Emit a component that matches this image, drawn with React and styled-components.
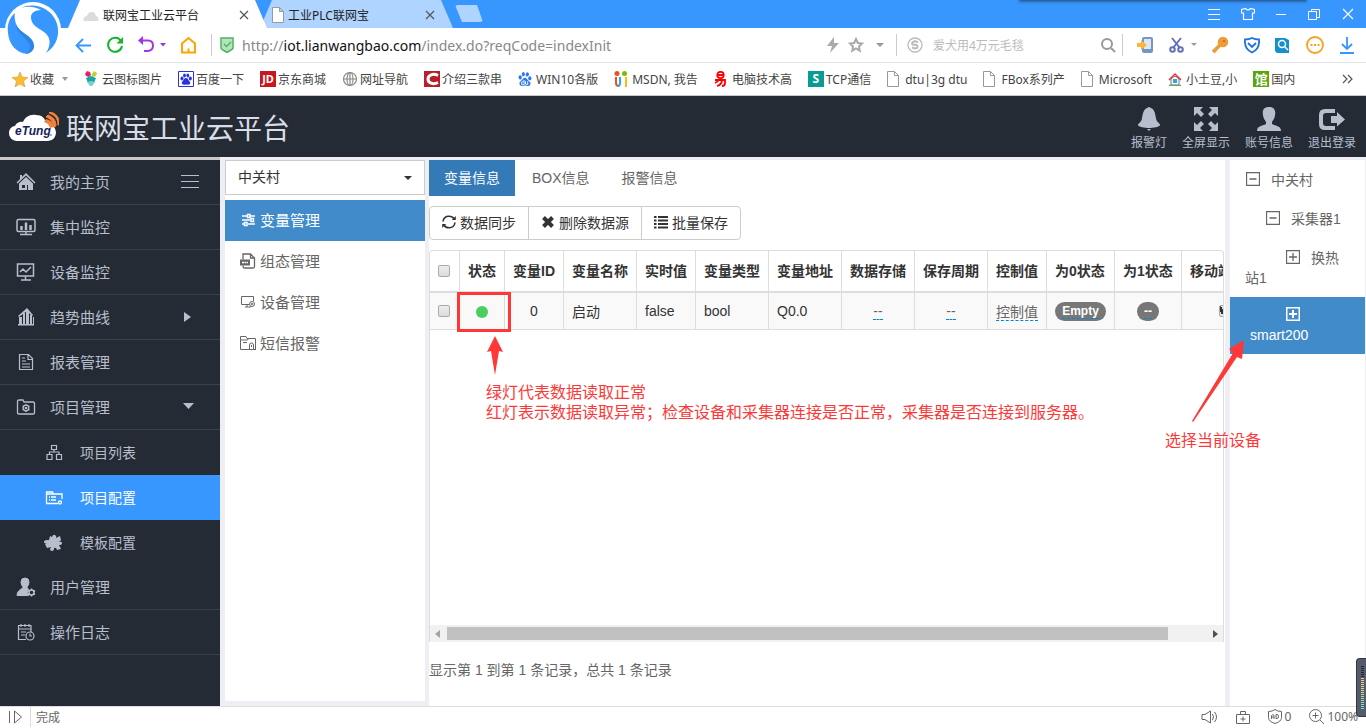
//Frameworks
import React from 'react';
import styled, { createGlobalStyle, css } from 'styled-components';

//Icons
import { SiBaidu } from 'react-icons/si';

/***************************************************************************************************
 ********************************************** Styles *********************************************
 **************************************************************************************************/
const uiFont = `'Noto Sans', 'Noto Sans CJK SC', sans-serif`;
const pageFont = `'Liberation Sans', 'Noto Sans CJK SC', sans-serif`;

const GlobalStyle = createGlobalStyle`
  * {
    box-sizing: border-box;
  }
  body {
    margin: 0;
    overflow: hidden;
    background: #fff;
    font-family: ${pageFont};
    font-size: 14px;
  }
  button, input, select {
    font: inherit;
    color: inherit;
    margin: 0;
  }
  button {
    padding: 0;
    border: 0;
    background: none;
    cursor: pointer;
  }
  a {
    color: inherit;
    text-decoration: none;
  }
  svg {
    display: block;
    flex: none;
  }
  ul {
    list-style: none;
    margin: 0;
    padding: 0;
  }
`;

const DivApp = styled.div`
  display: flex;
  flex-direction: column;
  position: relative;
  height: 100vh;
`;

/* Browser */
const DivTabBar = styled.div`
  display: flex;
  flex: none;
  height: 28px;
  padding-left: 68px;
  background: #3896ff;
  font-family: ${uiFont};
  font-size: 12px;
`;

const DivTab = styled.div`
  display: flex;
  align-items: center;
  width: ${props => (props.$active ? 199 : 193)}px;
  margin-right: -7px;
  padding: 2px 18px 0 ${props => (props.$active ? 15 : 12)}px;
  gap: 4px;
  color: #222;
  background: ${props => (props.$active ? '#fff' : '#afd4ff')};
  clip-path: polygon(12px 0, calc(100% - 12px) 0, 100% 100%, 0 100%);
  z-index: ${props => (props.$active ? 1 : 0)};
  white-space: nowrap;

  span {
    flex: 1;
  }
`;

const ButtonNewTab = styled.button`
  width: 28px;
  height: 17px;
  margin: 5px 0 0 9px;
  border-radius: 3px;
  background: #afd4ff;
  clip-path: polygon(0 0, 22px 0, 100% 100%, 7px 100%);
`;

const DivWindowButtons = styled.div`
  display: flex;
  align-items: center;
  gap: 20px;
  margin-left: auto;
  padding-right: 11px;
  color: #fff;
`;

const DivTopShadow = styled.div`
  position: absolute;
  top: 0;
  right: 60px;
  width: 286px;
  height: 1px;
  background: #26629f;
  box-shadow: 0 0 3px 1px #26629f;
`;

const DivBrowserLogo = styled.div`
  position: absolute;
  top: 2px;
  left: 4px;
  z-index: 2;
`;

const DivAddressBar = styled.div`
  display: flex;
  flex: none;
  align-items: center;
  height: 35px;
  border-bottom: 1px solid #e4e4e4;
  font-family: ${uiFont};
`;

const DivNavButtons = styled.div`
  display: flex;
  align-items: center;
  gap: 14px;
  width: 211px;
  padding-left: 75px;
`;

const DivUrl = styled.div`
  display: flex;
  flex: 1;
  align-items: center;
  gap: 8px;
  height: 22px;
  padding: 0 12px 0 8px;
  border-left: 1px solid #ccc;
  font-size: 14px;
  color: #888;

  > svg:last-child {
    margin-left: 4px;
  }
`;

const DivUrlText = styled.div`
  flex: 1;
  white-space: nowrap;

  b {
    font-weight: 400;
    color: #111;
  }
`;

const FormSearch = styled.form`
  display: flex;
  align-items: center;
  gap: 10px;
  width: 226px;
  height: 22px;
  padding: 0 6px 0 10px;
  border-left: 1px solid #ccc;
`;

const InputSearch = styled.input`
  flex: 1;
  min-width: 0;
  border: 0;
  padding: 0;
  outline: none;
  font-size: 12px;
  background: none;

  &::placeholder {
    color: #bbb;
    opacity: 1;
  }
`;

const DivTools = styled.div`
  display: flex;
  align-items: center;
  justify-content: space-between;
  width: 244px;
  height: 22px;
  padding: 0 11px 0 13px;
  border-left: 1px solid #ccc;
`;

const NavBookmarks = styled.nav`
  display: flex;
  flex: none;
  align-items: center;
  gap: 16px;
  height: 33px;
  padding: 0 13px 0 12px;
  border-bottom: 1px solid #c8c8c8;
  font-family: ${uiFont};
  font-size: 12px;
  color: #444;
  white-space: nowrap;
`;

const ABookmark = styled.a`
  display: flex;
  align-items: center;
  gap: 2px;

  > svg {
    margin-left: 6px;
  }
`;

const SpanIcon = styled.span`
  display: flex;
  width: 16px;
`;

const SpanSquare = styled.span`
  display: flex;
  align-items: center;
  justify-content: center;
  width: 16px;
  height: 16px;
  font-size: ${props => props.$size || 12}px;
  font-weight: 700;
  line-height: 16px;
  color: #fff;
  background: ${props => props.$bg};
`;

const ButtonMore = styled.button`
  margin-left: auto;
`;

const FooterStatus = styled.footer`
  display: flex;
  flex: none;
  align-items: center;
  height: 22px;
  padding: 0 8px 2px 0;
  border-top: 1px solid #ddd;
  background: #fff;
  font-family: ${uiFont};
  font-size: 12px;
  color: #666;
`;

const DivPlay = styled.div`
  display: flex;
  align-items: center;
  width: 31px;
  height: 20px;
  padding-left: 8px;
  margin-right: 5px;
  border-right: 1px solid #ddd;
`;

const DivStatusTools = styled.div`
  display: flex;
  align-items: center;
  gap: 18px;
  margin-left: auto;

  span {
    display: flex;
    align-items: center;
    gap: 3px;
  }
`;

const DivMeter = styled.div`
  position: absolute;
  right: 0;
  bottom: 11px;
  width: 10px;
  height: 59px;
  padding: 7px 2px 7px 4px;
  border: 1px solid #33363f;
  border-right: 0;
  border-radius: 4px 0 0 4px;
  background: #555b6b;
`;

const DivMeterBars = styled.div`
  height: 100%;
  background: repeating-linear-gradient(to bottom, transparent 0 1px, #555b6b 1px 2px),
    linear-gradient(to bottom, #23262e 0 26%, #f2c57c 26%, #e8e08a 50%, #9fe0a0 75%, #6fe0dc);
`;

/* Site header */
const HeaderSite = styled.header`
  display: flex;
  flex: none;
  align-items: center;
  height: 61px;
  padding: 0 10px 0 9px;
  background: #252b35;
`;

const H1Site = styled.h1`
  margin: 6px 0 0 7px;
  font-size: 28px;
  font-weight: 400;
  line-height: 40px;
  color: #d9dee6;
  white-space: nowrap;
`;

const NavHeader = styled.nav`
  display: flex;
  gap: 15px;
  margin: 6px 0 0 auto;
`;

const ButtonHeader = styled.button`
  display: flex;
  flex-direction: column;
  align-items: center;
  gap: 2px;
  font-size: 12px;
  line-height: 20px;
  color: #b7bfcd;
`;

/* Sidebar */
const DivBody = styled.div`
  display: flex;
  flex: 1;
  min-height: 0;
  position: relative;
  background: #efeef5;
`;

const NavSidebar = styled.nav`
  width: 220px;
  border-top: 3px solid #cbc7c9;
  background: #252b35;
`;

const AMenu = styled.a`
  display: flex;
  align-items: center;
  height: 45px;
  padding: 0 21px 0 16px;
  font-size: 15px;
  color: #b7bfcd;
  border-bottom: 1px solid #39414c;

  span {
    flex: 1;
    margin-left: 14px;
    padding-bottom: 2px;
  }

  ${props =>
    props.$sub &&
    css`
      padding-left: 44px;
      font-size: 14px;
      border-bottom: 0;

      span {
        margin-left: 16px;
      }
    `}

  ${props =>
    props.$active &&
    css`
      color: #fff;
      background: #3896ff;
    `}
`;

/* Project panel */
const AsideProject = styled.aside`
  width: 200px;
  margin: 3px 4px 5px 5px;
  background: #fff;
`;

const LabelProject = styled.label`
  display: grid;
  align-items: center;
  margin-bottom: 5px;

  select,
  svg {
    grid-area: 1 / 1;
  }

  svg {
    justify-self: end;
    margin-right: 13px;
    pointer-events: none;
  }
`;

const SelectProject = styled.select`
  appearance: none;
  width: 100%;
  height: 35px;
  padding: 0 12px 2px;
  border: 1px solid #ccc;
  border-radius: 0;
  background: #fff;
  color: #333;
`;

const AProject = styled.a`
  display: flex;
  align-items: center;
  gap: 4px;
  height: 41px;
  padding: 0 0 2px 15px;
  font-size: 15px;
  color: ${props => (props.$active ? '#fff' : '#666')};
  background: ${props => (props.$active ? '#428bca' : 'none')};
`;

/* Variables */
const MainContent = styled.main`
  display: flex;
  flex: 1;
  flex-direction: column;
  position: relative;
  min-width: 0;
  margin-top: 3px;
  background: #fff;
`;

const DivTabs = styled.div`
  display: flex;
  gap: 2px;
  margin-bottom: 10px;
`;

const ButtonTab = styled.button`
  height: 36px;
  padding: 0 15px 2px;
  color: ${props => (props.$active ? '#fff' : '#666')};
  background: ${props => (props.$active ? '#337ab7' : 'none')};
`;

const DivActions = styled.div`
  display: flex;
  margin-bottom: 10px;
`;

const ButtonAction = styled.button`
  display: flex;
  align-items: center;
  gap: 4px;
  height: 34px;
  padding: 0 12px 2px;
  border: 1px solid #ccc;
  color: #333;

  &:first-child {
    border-radius: 4px 0 0 4px;
  }
  &:last-child {
    border-radius: 0 4px 4px 0;
  }
  & + & {
    margin-left: -1px;
  }
`;

const DivTableBox = styled.div`
  display: flex;
  flex-direction: column;
  height: 392px;
  margin-right: 1px;
  border: 1px solid #ddd;
  border-bottom: 0;
  border-radius: 4px 4px 0 0;
  overflow: hidden;
`;

const DivTableScroll = styled.div`
  flex: 1;
  overflow: hidden;
`;

const TableVars = styled.table`
  table-layout: fixed;
  width: 838px;
  border-collapse: separate;
  border-spacing: 0;
  color: #333;

  th,
  td {
    padding: 0 8px;
    border-right: 1px solid #ddd;
    text-align: left;
    white-space: nowrap;
  }
  th {
    height: 42px;
    padding-bottom: 3px;
    border-bottom: 2px solid #ddd;
  }
  td {
    height: 37px;
    border-bottom: 1px solid #ddd;
    background: #f9f9f9;
  }
  .center {
    text-align: center;
  }
  .check {
    padding-bottom: 3px;
  }
`;

const InputCheck = styled.input`
  appearance: none;
  display: inline-block;
  width: 12px;
  height: 12px;
  border: 1px solid #a9a9a9;
  border-radius: 2px;
  background: linear-gradient(#ededed, #dcdcdc);
  vertical-align: middle;

  &:checked {
    background: linear-gradient(45deg, transparent 20%, #333 20% 50%, transparent 50%), #e4e4e4;
  }
`;

const SpanLight = styled.span`
  display: inline-block;
  width: 12px;
  height: 12px;
  border-radius: 50%;
  background: #4bce5f;
  vertical-align: middle;
`;

const AEditable = styled.a`
  color: #666;
  border-bottom: 1px dashed #0088cc;
`;

const SpanBadge = styled.span`
  display: inline-block;
  padding: 3px 7px;
  border-radius: 10px;
  font-size: 12px;
  font-weight: 700;
  line-height: 13px;
  color: #fff;
  background: #777;
  vertical-align: middle;

  a {
    color: #fff;
  }
`;

const DivScrollbar = styled.div`
  display: flex;
  align-items: center;
  height: 17px;
  padding: 0 5px;
  gap: 7px;
  background: #f1f1f1;
`;

const DivTrack = styled.div`
  flex: 1;
  height: 13px;
`;

const DivThumb = styled.div`
  width: 95%;
  height: 13px;
  background: #c1c1c1;
`;

const PRecords = styled.p`
  margin: 18px 0 0;
  line-height: 20px;
  color: #666;
`;

/* Device tree */
const AsideTree = styled.aside`
  width: 135px;
  margin: 3px 1px 0 5px;
  background: #fff;
`;

const LiNode = styled.li`
  padding: ${props => (props.$active ? 8 : 10)}px 15px 9px;
  line-height: 20px;
  color: ${props => (props.$active ? '#fff' : '#666')};
  background: ${props => (props.$active ? '#428bca' : 'none')};

  button {
    margin: 0 11px 0 ${props => props.$level * 20 + 1}px;
    vertical-align: -1px;
  }
`;

const SpanDevice = styled.span`
  display: inline-block;
  padding: 0 5px;
`;

/* Notes drawn over the page */
const DivNoteBox = styled.div`
  position: absolute;
  top: 132px;
  left: 28px;
  width: 54px;
  height: 40px;
  border: 3px solid #ff3837;
`;

const SvgNoteArrow = styled.svg`
  position: absolute;
  top: 175px;
  left: 57px;
`;

const SvgDeviceArrow = styled.svg`
  position: absolute;
  top: 182px;
  right: 121px;
  z-index: 1;
`;

const PNote = styled.p`
  position: absolute;
  margin: 0;
  font-size: 16px;
  line-height: 20px;
  color: #ff3837;
  white-space: nowrap;
`;

const PLightNote = styled(PNote)`
  top: 223px;
  left: 57px;
`;

const PDeviceNote = styled(PNote)`
  top: 274px;
  right: 105px;
`;

/***************************************************************************************************
 ********************************************** Icons **********************************************
 **************************************************************************************************/
const Line = ({ w = 18, h = w, sw = 1, color, children }) => (
  <svg
    width={w}
    height={h}
    viewBox={`0 0 ${w} ${h}`}
    fill='none'
    stroke='currentColor'
    strokeWidth={sw}
    color={color}
    aria-hidden='true'
  >
    {children}
  </svg>
);

const Solid = ({ w = 18, h = w, color, children }) => (
  <svg width={w} height={h} viewBox={`0 0 ${w} ${h}`} fill={color || 'currentColor'} aria-hidden='true'>
    {children}
  </svg>
);

const Caret = ({ color = '#999', w = 8, h = 4 }) => (
  <Solid w={w} h={h} color={color}>
    <path d={`M0 0h${w}L${w / 2} ${h}z`} />
  </Solid>
);

const PageIcon = () => (
  <Line w={12} h={16} color='#999'>
    <path d='M.5.5h7l4 4v11H.5zM7.5.5v4h4' fill='#fff' />
  </Line>
);

const CloseIcon = () => (
  <Line w={10} color='#555' sw={1.2}>
    <path d='M1 1l8 8M9 1L1 9' />
  </Line>
);

const BrowserLogo = () => (
  <svg width='58' height='54' viewBox='0 0 58 54' aria-hidden='true'>
    <circle cx='29' cy='28' r='28' fill='#fff' />
    <path d='M11 11C5 16 3 23 4 31c1 12 9 20 19 21 7-2 9-8 5-14-4-6-13-8-16-16-1-4-2-7-1-11z' fill='#3896ff' />
    <path d='M12 22c3 8 12 10 16 16 4 6 2 12-5 14 3-4 4-8 1-12-4-6-12-9-12-18z' fill='#2173cf' opacity='.5' />
    <path d='M17 6c12-6 29-1 35 13 5 12 1 25-10 32 6-9 4-17-2-21-7-5-13-7-13-15 0-4 4-7 10-7C30 4 23 4 17 6z' fill='#3896ff' />
  </svg>
);

const CloudLogo = () => (
  <svg width='50' height='30' viewBox='0 0 50 30' aria-hidden='true'>
    <path
      d='M8 29C3 29 0 25 0 21s3-7 6-7c1-3 5-5 8-4C16 5 21 2 27 3c6 0 9 3 10 8 5 0 9 3 10 9 0 5-3 9-9 9z'
      fill='#fff'
    />
    <path d='M35 10c4 1 5 3 6 6l4-1c-1-5-4-7-8-8z' fill='#f5813a' />
    <path d='M37 5c5 2 7 5 8 10l2-1c0-6-3-9-8-11zM40 1c6 2 9 6 9 12h1c1-7-3-12-9-13z' fill='#f5813a' stroke='#f5813a' />
    <text
      x='6'
      y='23'
      fontFamily='Liberation Sans, sans-serif'
      fontSize='12'
      fontWeight='700'
      fontStyle='italic'
      fill='#14235a'
    >
      eTung
    </text>
    <circle cx='42' cy='23' r='1' fill='#8895b5' />
  </svg>
);

const toggleIcons = {
  minus: 'M.5.5h13v13H.5zM3.5 7h7',
  plus: 'M.5.5h13v13H.5zM3 7h8M7 3v8'
};

/***************************************************************************************************
 *********************************************** Data **********************************************
 **************************************************************************************************/
const bookmarks = [
  {
    text: '云图标图片',
    icon: (
      <Solid w={15} h={16}>
        <path d='M1 3l2-3 3 1 1 3-2 2-3-1z' fill='#ec1f6c' />
        <path d='M8 3l2-3 3 2-1 3-4 1z' fill='#b9d433' />
        <path d='M2 7l5-2 5 2-2 5H4z' fill='#17a7a4' />
        <path d='M3 11l4-1 4 1-3 4H6z' fill='#79cfd0' />
      </Solid>
    )
  },
  {
    text: '百度一下',
    icon: (
      <Line w={16} color='#2932e1'>
        <path d='M.5.5h15v15H.5z' fill='#fff' />
        <g fill='#2932e1' stroke='none'>
          <ellipse cx='4' cy='7.5' rx='1.5' ry='2' />
          <ellipse cx='6.5' cy='4.5' rx='1.4' ry='2' />
          <ellipse cx='9.8' cy='4.5' rx='1.4' ry='2' />
          <ellipse cx='12.3' cy='7.5' rx='1.5' ry='2' />
          <path d='M8 7c2 0 2 2 4 4 1 3-2 3-4 2.500-2 .5-5 .5-4-2.500 2-2 2-4 4-4z' />
        </g>
      </Line>
    )
  },
  { text: '京东商城', icon: <SpanSquare $bg='#c9151e' $size={11}>JD</SpanSquare> },
  {
    text: '网址导航',
    icon: (
      <Line w={16} color='#888' sw={1.2}>
        <circle cx='8' cy='8' r='6.500' />
        <ellipse cx='8' cy='8' rx='3' ry='6.500' />
        <path d='M8 1.500v13M1.500 8h13' />
      </Line>
    )
  },
  {
    text: '介绍三款串',
    icon: (
      <Line w={16} color='#fff' sw={3}>
        <path d='M0 0h16v16H0z' fill='#b81f28' stroke='none' />
        <path d='M14 4.500C9 2 4 4 4 8s5 6 10 3.500' />
      </Line>
    )
  },
  { text: 'WIN10各版', icon: <SiBaidu size={14} color='#2d78f4' /> },
  {
    text: 'MSDN, 我告',
    icon: (
      <Line w={14} h={16} sw={2}>
        <circle cx='3' cy='2.500' r='2.500' fill='#f04e23' stroke='none' />
        <circle cx='10.500' cy='2.500' r='2.500' fill='#7fba00' stroke='none' />
        <path d='M2 6v6q0 3 3 3' stroke='#f04e23' />
        <path d='M6 6v6q0 3-2 3' stroke='#2fa8e8' />
        <path d='M12 6v10' stroke='#fdb913' />
      </Line>
    )
  },
  {
    text: '电脑技术高',
    icon: (
      <Line w={14} h={16} color='#f00' sw={1.800}>
        <circle cx='6.500' cy='4' r='3.200' />
        <path d='M4 4h5M1 9h10v3q0 3-3 3M5 8q-1 3-4 4M8 10q-1 4-5 5' />
      </Line>
    )
  },
  { text: 'TCP通信', icon: <SpanSquare $bg='#0a9b94'>S</SpanSquare> },
  { text: 'dtu|3g dtu', icon: <PageIcon /> },
  { text: 'FBox系列产', icon: <PageIcon /> },
  { text: 'Microsoft', icon: <PageIcon /> },
  {
    text: '小土豆,小',
    icon: (
      <Line w={14} sw={1.500}>
        <path d='M3 7v6h8V7L7 4z' fill='#fff' stroke='#777' strokeWidth='1' />
        <path d='M1 8l6-6 6 6' stroke='#e33' />
        <path d='M5 7h4v4H5z' fill='#2aa4f4' stroke='none' />
        <path d='M1 13.500h12' stroke='#58b058' />
      </Line>
    )
  },
  { text: '国内', icon: <SpanSquare $bg='#5aa50a' $size={13}>馆</SpanSquare> }
];

const headerLinks = [
  {
    text: '报警灯',
    icon: (
      <Solid w={22} h={24}>
        <path d='M11 0c1 0 1 1 2 1 4 2 4 6 5 10 0 4 4 5 4 7 0 2-7 3-11 3S0 20 0 18c0-2 4-3 4-7C5 7 5 3 9 1c1 0 1-1 2-1zM9 22h4l-2 2z' />
      </Solid>
    )
  },
  {
    text: '全屏显示',
    icon: (
      <Solid w={24}>
        <path d='M0 0h9L6 3l4 4-3 3-4-4-3 3zM24 0v9l-3-3-4 4-3-3 4-4-3-3zM0 24v-9l3 3 4-4 3 3-4 4 3 3zM24 24h-9l3-3-4-4 3-3 4 4 3-3z' />
      </Solid>
    )
  },
  {
    text: '账号信息',
    icon: (
      <Solid w={24}>
        <path d='M12 0c5 0 7 3 6 8 0 3-2 5-3 7v2c4 2 9 2 9 7H0c0-5 5-5 9-7v-2c-1-2-3-4-3-7C5 3 7 0 12 0z' />
      </Solid>
    )
  },
  {
    text: '退出登录',
    icon: (
      <Solid w={26} h={24}>
        <path d='M16 2H6Q0 2 0 8v9q0 6 6 6h10v-4H7q-3 0-3-3V9q0-3 3-3h9zM12 9h6V5l8 7.500-8 7V16h-6z' />
      </Solid>
    )
  }
];

const menu = [
  {
    text: '我的主页',
    icon: (
      <Solid w={20}>
        <path d='M10 1l9.500 9.500-1 1L10 3.500l-8.500 8-1-1L4 7V3h2v2z' />
        <path d='M10 5l7 6.500V18h-5v-5h-1v5H3v-6.500zM6 13v3h3v-3z' fillRule='evenodd' />
      </Solid>
    ),
    after: (
      <Line w={18} h={14}>
        <path d='M0 .5h18M0 6.500h18M0 12.500h18' />
      </Line>
    )
  },
  {
    text: '集中监控',
    icon: (
      <Line w={20} sw={1.500}>
        <rect x='1' y='2.500' width='18' height='12' rx='1.500' />
        <path d='M5.500 13V9M10 13V5.500M14.500 13V8' strokeWidth='2.500' />
        <path d='M10 15v2M4 17.500h12' />
      </Line>
    )
  },
  {
    text: '设备监控',
    icon: (
      <Line w={20} sw={1.500}>
        <path d='M1.500 2h16v12h-16zM9.500 14v4M5 18h10M4 10l3-3 3 3 5-5' />
      </Line>
    )
  },
  {
    text: '趋势曲线',
    icon: (
      <Solid w={20}>
        <path d='M2 17h16v1.500H2zM3 10h3v7H3zM7 6h2v11H7zM10 3h3v14h-3zM14 8h2v9h-2zM17 10h1v7h-1zM2 9l9-8 6 7-1 1-5-5-8 6z' />
      </Solid>
    ),
    after: (
      <Solid w={18} h={10}>
        <path d='M3 0l7 5-7 5z' />
      </Solid>
    )
  },
  {
    text: '报表管理',
    icon: (
      <Line w={20} sw={1.200}>
        <path d='M3.500 2.500h9l4 4v11h-13zM12 2.500v5h4.500M6 6h3M6 9h4M6 12h8M6 15h8' />
      </Line>
    )
  },
  {
    text: '项目管理',
    icon: (
      <Line w={20} sw={1.300}>
        <path d='M1.500 16V4.500q0-1.500 1.500-1.500h4l1 2h9q1.500 0 1.500 1.500V16q0 1-1.500 1H3q-1.500 0-1.500-1z' />
        <circle cx='10' cy='11' r='2.800' />
        <circle cx='10' cy='11' r='.7' />
        <path d='M10 7v1M10 14v1M6.500 9l1 .5M12.500 12.500l1 .5M6.500 13l1-.5M12.500 9.500l1-.5' />
      </Line>
    ),
    after: (
      <Solid w={18} h={8}>
        <path d='M2 0h11L7.500 6z' />
      </Solid>
    )
  },
  {
    text: '项目列表',
    sub: true,
    icon: (
      <Line w={20} sw={1.200}>
        <path d='M7.500 2.500h5v4h-5zM3 11.500h5v5H3zM12.500 11.500h5v5h-5zM10 6.500V9M5.500 11.500V9h9.500v2.500' />
      </Line>
    )
  },
  {
    text: '项目配置',
    sub: true,
    active: true,
    icon: (
      <Line w={20} sw={1.300}>
        <path d='M14 15.500H2.500V4h6l1 2h8.500v5M2.500 6H9M5 9h1M7 9h5M5 12h1M7 12h5' />
        <circle cx='16' cy='14.500' r='1.500' />
      </Line>
    )
  },
  {
    text: '模板配置',
    sub: true,
    icon: (
      <Solid w={20}>
        <path d='M6 3l2 1q1-3 3-2t1 3l4-2 1 4-2 2q3-1 3 1t-3 2l2 4-4 1-1-2q-2-1-2 1t-2 2-2-2l1-2-4 1-2-4 2-1q-3 1-3-1t3-2L5 7z' />
      </Solid>
    )
  },
  {
    text: '用户管理',
    icon: (
      <Line w={20}>
        <path d='M9 1q4 0 4 4 0 3-2 5v1l1.500 1q-2.500 3 0 6.500H1q0-5 6-7.500v-1Q5 8 5 5q0-4 4-4z' fill='currentColor' />
        <circle cx='15.500' cy='15.500' r='2.500' strokeWidth='1.500' />
        <path d='M15.500 11.500v1.500M15.500 18v1.500M12 13.500l1.500.8M17.500 16.800l1.500.7M12 17.500l1.500-.7M17.500 14.300l1.500-.8' strokeWidth='1.500' />
      </Line>
    )
  },
  {
    text: '操作日志',
    icon: (
      <Line w={20} sw={1.200}>
        <path d='M10 17.500H2.500v-14H15V10M5 2v3M9 2v3M13 2v3M2.500 7H15M5 10h5M5 13h4' />
        <circle cx='14' cy='14' r='4' />
        <path d='M14 11.500V14h2' />
      </Line>
    )
  }
];

const projectLinks = [
  {
    text: '变量管理',
    active: true,
    icon: (
      <Line w={16} sw={1.500}>
        <path d='M2 4h5M10 4h5M2 8h8.500M2 12h2M8 12h7' />
        <rect x='7.500' y='2.500' width='2.500' height='3' />
        <rect x='11' y='6.500' width='2.500' height='3' />
        <rect x='4.500' y='10.500' width='2.500' height='3' />
      </Line>
    )
  },
  {
    text: '组态管理',
    icon: (
      <Line w={16} sw={1.300}>
        <path d='M3 6.500V1h7.500L14.500 5v8.500q0 1.500-1.500 1.500H4.500Q3 15 3 12.500M10.500 1v4h4' />
        <path d='M0 6.500h10v6H0z' fill='currentColor' stroke='none' />
        <path d='M2 9.500h6' stroke='#fff' strokeDasharray='2 .5' />
      </Line>
    )
  },
  {
    text: '设备管理',
    icon: (
      <Line w={16}>
        <path d='M9 10.500H1.500v-8h12V7M5 13h6M7 10.500V13' />
        <circle cx='12' cy='10' r='2.500' />
        <circle cx='12' cy='10' r='.8' />
      </Line>
    )
  },
  {
    text: '短信报警',
    icon: (
      <Line w={16}>
        <path d='M8 14.500H.5v-13H6l1 2h8.500V14.500M.5 5h7l1-1.500M3 7.500h4' />
        <path d='M9.500 14v-4q0-2 2-2t2 2v4M8 14.500h8M11.500 10v2' />
      </Line>
    )
  }
];

const actions = [
  {
    text: '数据同步',
    icon: (
      <Line w={14} sw={1.600}>
        <path d='M1 6.500C1.500 3 4 1.200 7 1.200c2 0 4 1 5 2.500M13 7.500c-.5 3.500-3 5.300-6 5.300-2 0-4-1-5-2.500' />
        <path d='M13.800 1v4H9.800zM.2 13V9h4z' fill='currentColor' stroke='none' />
      </Line>
    )
  },
  {
    text: '删除数据源',
    icon: (
      <Line w={14} sw={4}>
        <path d='M2.500 2.500l9 9M11.500 2.500l-9 9' />
      </Line>
    )
  },
  {
    text: '批量保存',
    icon: (
      <Line w={14} sw={2}>
        <path d='M0 2h2.500M4 2h10M0 5.500h2.500M4 5.500h10M0 9h2.500M4 9h10M0 12.500h2.500M4 12.500h10' />
      </Line>
    )
  }
];

const columns = [
  { title: '', width: 30 },
  { title: '状态', width: 45 },
  { title: '变量ID', width: 59 },
  { title: '变量名称', width: 73 },
  { title: '实时值', width: 59 },
  { title: '变量类型', width: 73 },
  { title: '变量地址', width: 73 },
  { title: '数据存储', width: 73 },
  { title: '保存周期', width: 73 },
  { title: '控制值', width: 59 },
  { title: '为0状态', width: 68 },
  { title: '为1状态', width: 67 },
  { title: '移动端', width: 86 }
];

const nodes = [
  { text: '中关村', level: 0, icon: 'minus' },
  { text: '采集器1', level: 1, icon: 'minus' },
  { text: '换热站1', level: 2, icon: 'plus' },
  { text: 'smart200', level: 2, icon: 'plus', active: true }
];

/***************************************************************************************************
 ******************************************** Components *******************************************
 **************************************************************************************************/
const Browser = () => (
  <>
    <DivTabBar>
      <DivTab $active>
        <Solid w={16} h={16}>
          <path d='M1 14q-2-4 3-5 1-4 5-4 3 0 4 4 4 1 2 5z' fill='#dcdcdc' />
        </Solid>
        <span>联网宝工业云平台</span>
        <CloseIcon />
      </DivTab>
      <DivTab>
        <PageIcon />
        <span>工业PLC联网宝</span>
        <CloseIcon />
      </DivTab>
      <ButtonNewTab aria-label='New tab' />
      <DivWindowButtons>
        <Line w={14}>
          <path d='M1 2.500h12M1 7.500h12M1 12.500h12' />
        </Line>
        <Line w={14} sw={1.200}>
          <path d='M4.500 1.500q2.500 3 5 0l4 1V6h-2v6.500h-9V6h-2V2.500z' />
        </Line>
        <Line w={12}>
          <path d='M1 6.500h10' />
        </Line>
        <Line w={14}>
          <path d='M1.500 4.500h8v8h-8zM4.500 4.500v-2h8v8h-3' />
        </Line>
        <Line w={14} sw={1.200}>
          <path d='M2 2l10 10M12 2L2 12' />
        </Line>
      </DivWindowButtons>
    </DivTabBar>
    <DivBrowserLogo>
      <BrowserLogo />
    </DivBrowserLogo>
    <DivTopShadow />
    <DivAddressBar>
      <DivNavButtons>
        <Line w={17} color='#3896ff' sw={1.800}>
          <path d='M16 8.500H1.500M8 2L1.500 8.500 8 15' />
        </Line>
        <Line w={18} color='#12b52b' sw={2}>
          <path d='M15 5a7 7 0 1 0 1 5' />
          <path d='M17 1v6.500h-6.500z' fill='#12b52b' stroke='none' />
        </Line>
        <Line w={28} h={18} color='#a136e8' sw={2}>
          <path d='M4 4.500h6q5 0 5 5t-5 5.500H6' />
          <path d='M0 4.500L5 0v9zM22 7h6l-3 3.500z' fill='#a136e8' stroke='none' />
        </Line>
        <Line w={17} h={18} color='#ffa400' sw={2}>
          <path d='M2 7.500v9h13v-9L8.500 2zM8.500 16.500v-4' />
        </Line>
      </DivNavButtons>
      <DivUrl>
        <Line w={14} h={16} color='#52b266' sw={1.500}>
          <path d='M1 1h12v10q0 1-2 2l-4 2.500L3 13q-2-1-2-2z' fill='#b4e4bb' />
          <path d='M4 7l2.500 2.500L11 5' />
        </Line>
        <DivUrlText>
          http://<b>iot.lianwangbao.com</b>/index.do?reqCode=indexInit
        </DivUrlText>
        <Solid w={14} h={16} color='#aaa'>
          <path d='M8 0L1 9h5l-2 7 9-10H8z' />
        </Solid>
        <Line w={16} color='#aaa' sw={2}>
          <path d='M8 2l1.800 4 4.200.5-3 3 .7 4.200L8 11.500l-3.700 2.200.7-4.200-3-3L6.200 6z' />
        </Line>
        <Caret />
      </DivUrl>
      <FormSearch>
        <Line w={16} color='#bbb' sw={1.300}>
          <circle cx='8' cy='8' r='7' />
          <path d='M11 5.500Q8 3.500 6 5t0 2.500q5 0 4.500 2.500T5 10.500' strokeWidth='2' />
        </Line>
        <InputSearch aria-label='Search' placeholder='爱犬用4万元毛毯' />
        <Line w={16} color='#999' sw={2}>
          <circle cx='7' cy='7' r='5' />
          <path d='M11 11l4 4' />
        </Line>
      </FormSearch>
      <DivTools>
        <Solid w={18}>
          <rect x='6' y='1' width='11' height='16' rx='2' fill='#7595c9' />
          <path d='M8 3h7v10H8z' fill='#dfe8f7' />
          <path d='M1 7h4V4l6 5-6 5v-3H1z' fill='#f9b53c' />
        </Solid>
        <Line w={28} h={16} color='#6272b8' sw={2}>
          <path d='M3 1l8 10M12 1L4 11' />
          <circle cx='3.500' cy='12.500' r='2.300' />
          <circle cx='11.500' cy='12.500' r='2.300' />
          <path d='M22 6h6l-3 3z' fill='#999' stroke='none' />
        </Line>
        <Line w={18} color='#ee9b38' sw={3.500}>
          <path d='M2 16l8-8M3 14l2 2' />
          <circle cx='12' cy='6' r='3.500' fill='#ee9b38' />
          <circle cx='13' cy='5' r='1' fill='#b06a1d' stroke='none' />
        </Line>
        <Line w={16} h={17} color='#1f6fe8' sw={1.800}>
          <path d='M1 2.500q4 0 7-1.500 3 1.500 7 1.500 1 9-7 13Q0 11.500 1 2.500zM4 6l4 4 4-4' />
        </Line>
        <Line w={16} color='#fff' sw={1.500}>
          <path d='M1 1h10l4 2v13H3l-2-2z' fill='#168fcf' stroke='none' />
          <circle cx='8' cy='7' r='3.500' />
          <path d='M10.500 9.500L14 13' />
        </Line>
        <Line w={20} color='#f7a21b' sw={1.800}>
          <circle cx='10' cy='10' r='8' />
          <path d='M5.500 10h2M9 10h2M12.500 10h2' strokeWidth='2' />
        </Line>
        <Line w={16} h={17} color='#3896ff' sw={1.800}>
          <path d='M8 0v12M3 7l5 5 5-5M1 16h14' />
        </Line>
      </DivTools>
    </DivAddressBar>
    <NavBookmarks>
      <ABookmark href='#fav'>
        <SpanIcon>
          <Solid w={16}>
            <path d='M8 1l2 5 6 .5-4.500 3.500L13 16l-5-3-5 3 1.500-6L0 6.500 6 6z' fill='#f8bd35' stroke='#d99a2b' strokeWidth='.6' />
          </Solid>
        </SpanIcon>
        收藏
        <Caret w={6} h={4} />
      </ABookmark>
      {bookmarks.map(({ text, icon }) => (
        <ABookmark key={text} href='#bookmark'>
          <SpanIcon>{icon}</SpanIcon>
          {text}
        </ABookmark>
      ))}
      <ButtonMore aria-label='More bookmarks'>
        <Line w={11} h={10} color='#555' sw={1.200}>
          <path d='M1 1l4 4-4 4M6 1l4 4-4 4' />
        </Line>
      </ButtonMore>
    </NavBookmarks>
  </>
);

const Header = () => (
  <HeaderSite>
    <CloudLogo />
    <H1Site>联网宝工业云平台</H1Site>
    <NavHeader>
      {headerLinks.map(({ text, icon }) => (
        <ButtonHeader key={text}>
          {icon}
          {text}
        </ButtonHeader>
      ))}
    </NavHeader>
  </HeaderSite>
);

const Sidebar = () => (
  <NavSidebar>
    {menu.map(({ text, icon, sub, active, after }) => (
      <AMenu key={text} href='#menu' $sub={sub} $active={active}>
        {icon}
        <span>{text}</span>
        {after}
      </AMenu>
    ))}
  </NavSidebar>
);

const ProjectPanel = () => (
  <AsideProject>
    <LabelProject>
      <SelectProject aria-label='项目' defaultValue='中关村'>
        <option>中关村</option>
      </SelectProject>
      <Caret color='#333' />
    </LabelProject>
    {projectLinks.map(({ text, icon, active }) => (
      <AProject key={text} href='#project' $active={active}>
        {icon}
        {text}
      </AProject>
    ))}
  </AsideProject>
);

const VariableTable = () => (
  <DivTableBox>
    <DivTableScroll>
      <TableVars>
        <colgroup>
          {columns.map(({ title, width }) => (
            <col key={title} width={width} />
          ))}
        </colgroup>
        <thead>
          <tr>
            {columns.map(({ title }) => (
              <th key={title}>{title || <InputCheck type='checkbox' aria-label='全选' />}</th>
            ))}
          </tr>
        </thead>
        <tbody>
          <tr>
            <td className='check'>
              <InputCheck type='checkbox' aria-label='启动' />
            </td>
            <td className='center'>
              <SpanLight />
            </td>
            <td className='center'>0</td>
            <td>启动</td>
            <td>false</td>
            <td>bool</td>
            <td>Q0.0</td>
            <td className='center'>
              <AEditable href='#store'>--</AEditable>
            </td>
            <td className='center'>
              <AEditable href='#period'>--</AEditable>
            </td>
            <td>
              <AEditable href='#control'>控制值</AEditable>
            </td>
            <td className='center'>
              <SpanBadge>
                <AEditable href='#zero'>Empty</AEditable>
              </SpanBadge>
            </td>
            <td className='center'>
              <SpanBadge>
                <AEditable href='#one'>--</AEditable>
              </SpanBadge>
            </td>
            <td className='center check'>
              <InputCheck type='checkbox' defaultChecked aria-label='移动端' />
            </td>
          </tr>
        </tbody>
      </TableVars>
    </DivTableScroll>
    <DivScrollbar>
      <Solid w={5} h={8} color='#a3a3a3'>
        <path d='M5 0v8L0 4z' />
      </Solid>
      <DivTrack>
        <DivThumb />
      </DivTrack>
      <Solid w={5} h={8} color='#505050'>
        <path d='M0 0v8l5-4z' />
      </Solid>
    </DivScrollbar>
  </DivTableBox>
);

const Content = () => (
  <MainContent>
    <DivTabs role='tablist'>
      {['变量信息', 'BOX信息', '报警信息'].map((tab, i) => (
        <ButtonTab key={tab} role='tab' $active={i === 0}>
          {tab}
        </ButtonTab>
      ))}
    </DivTabs>
    <DivActions>
      {actions.map(({ text, icon }) => (
        <ButtonAction key={text}>
          {icon}
          {text}
        </ButtonAction>
      ))}
    </DivActions>
    <VariableTable />
    <PRecords>显示第 1 到第 1 条记录，总共 1 条记录</PRecords>
    <DivNoteBox />
    <SvgNoteArrow width='18' height='41' fill='#ff3837'>
      <path d='M9 1l8 16-4-1-4 24-4-24-4 1z' />
    </SvgNoteArrow>
    <PLightNote>
      绿灯代表数据读取正常
      <br />
      红灯表示数据读取异常；检查设备和采集器连接是否正常，采集器是否连接到服务器。
    </PLightNote>
  </MainContent>
);

const DeviceTree = () => (
  <AsideTree>
    <ul>
      {nodes.map(({ text, level, icon, active }) => (
        <LiNode key={text} $level={level} $active={active}>
          <button aria-label={text}>
            <Line w={14} sw={active ? 2 : 1.300}>
              <path d={toggleIcons[icon]} />
            </Line>
          </button>
          {active ? <SpanDevice>{text}</SpanDevice> : text}
        </LiNode>
      ))}
    </ul>
  </AsideTree>
);

class App extends React.Component {
  render() {
    return (
      <DivApp>
        <GlobalStyle />
        <Browser />
        <Header />
        <DivBody>
          <Sidebar />
          <ProjectPanel />
          <Content />
          <DeviceTree />
          <SvgDeviceArrow width='54' height='84' fill='#ff3837'>
            <path d='M53 1l-2 19-5-2L2 83l-1-1 41-68-4-4z' />
          </SvgDeviceArrow>
          <PDeviceNote>选择当前设备</PDeviceNote>
        </DivBody>
        <FooterStatus>
          <DivPlay>
            <Line w={15} h={14}>
              <path d='M1.500 1v12M6.500 1v12l7-6z' />
            </Line>
          </DivPlay>
          完成
          <DivStatusTools>
            <Line w={17} h={14}>
              <path d='M1 4.500h3L9.500 1v12L4 9.500H1zM11.500 4q2 3 0 6M13.500 2q4 5 0 10' />
            </Line>
            <Line w={14}>
              <path d='M.5 4.500h13v9H.5zM4.500 4.500v-3h5v3M7 6.500v5M4.500 9h5' />
            </Line>
            <span>
              <Line w={14} h={15}>
                <path d='M.5 2.500q4 0 6.500-2 2.500 2 6.500 2v6q0 4-6.500 6-6.500-2-6.500-6zM3.500 10V6.500q1.500-2 2.500 0V10M3.500 8H6M8 5.500v4h1q1.500 0 1.500-2t-1.500-2z' />
              </Line>
              0
            </span>
            <span>
              <Line w={15}>
                <circle cx='6.500' cy='6.500' r='6' />
                <path d='M11 11l4 4M3.500 6.500h6M6.500 3.500v6' />
              </Line>
              100%
            </span>
          </DivStatusTools>
        </FooterStatus>
        <DivMeter>
          <DivMeterBars />
        </DivMeter>
      </DivApp>
    );
  }
}

export default App;
